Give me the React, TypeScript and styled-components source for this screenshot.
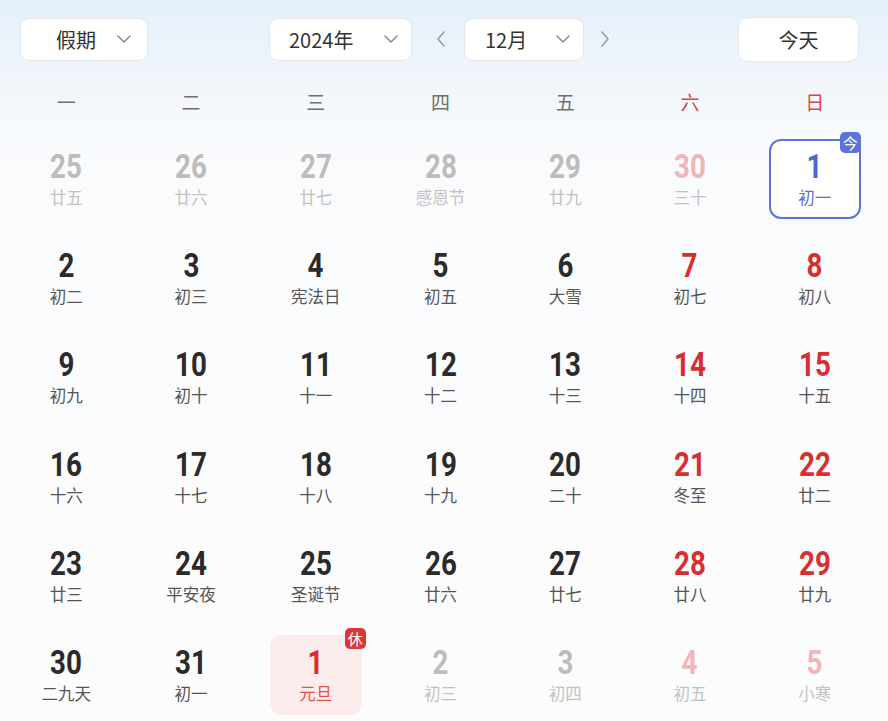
import React from "react";
import styled, { createGlobalStyle, css } from "styled-components";

const Global = createGlobalStyle`
  html, body { margin: 0; padding: 0; }
  body {
    width: 888px;
    height: 721px;
    overflow: hidden;
    font-family: "Noto Sans CJK SC", "Noto Sans", sans-serif;
    background: #fbfbfc;
  }
`;

const Page = styled.div`
  width: 888px;
  height: 721px;
  box-sizing: border-box;
  padding-top: 17px;
  background: linear-gradient(
    180deg,
    #e5f0fa 0px,
    #edf4fb 60px,
    #f5f8fc 110px,
    #fafbfc 170px,
    #fcfcfc 100%
  );
`;

const Toolbar = styled.div`
  display: flex;
  align-items: center;
  justify-content: space-between;
  height: 44px;
  padding: 0 29px 0 20px;
`;

const Group = styled.div`
  display: flex;
  align-items: center;
`;

const Select = styled.div<{ $w: number; $pl: number; $pr: number }>`
  box-sizing: border-box;
  width: ${(p) => p.$w}px;
  height: 43px;
  display: flex;
  align-items: center;
  justify-content: space-between;
  padding: 0 ${(p) => p.$pr}px 0 ${(p) => p.$pl}px;
  background: #ffffff;
  border: 1px solid #e4e6ea;
  border-radius: 9px;
  font-size: 20px;
  color: #333;
`;

const TodayButton = styled.div`
  box-sizing: border-box;
  width: 121px;
  height: 45px;
  display: flex;
  align-items: center;
  justify-content: center;
  background: #ffffff;
  border: 1px solid #e4e6ea;
  border-radius: 10px;
  font-size: 20px;
  color: #333;
`;

const ArrowBtn = styled.div<{ $ml: number; $mr: number }>`
  width: 24px;
  height: 43px;
  display: flex;
  align-items: center;
  justify-content: center;
  margin: 0 ${(p) => p.$mr}px 0 ${(p) => p.$ml}px;
`;

const WeekHeader = styled.div`
  display: grid;
  grid-template-columns: repeat(7, 1fr);
  width: 873px;
  margin: 12px 0 0 4px;
  height: 56px;
  align-items: center;
`;

const WeekLabel = styled.div<{ $red?: boolean }>`
  text-align: center;
  font-size: 19px;
  color: ${(p) => (p.$red ? "#d9473f" : "#707070")};
`;

const Grid = styled.div`
  display: grid;
  grid-template-columns: repeat(7, 1fr);
  grid-auto-rows: 99.2px;
  width: 873px;
  margin-left: 4px;
`;

const Cell = styled.div`
  display: flex;
  align-items: center;
  justify-content: center;
`;

type Kind = "normal" | "weekend" | "faded" | "fadedRed" | "today" | "holiday";

const DayBox = styled.div<{ $kind: Kind }>`
  position: relative;
  box-sizing: border-box;
  width: 92px;
  height: 80px;
  padding-top: 4px;
  border-radius: 12px;
  display: flex;
  flex-direction: column;
  align-items: center;
  justify-content: center;
  gap: 3px;
  ${(p) =>
    p.$kind === "today" &&
    css`
      border: 2px solid #5a74da;
      background: #ffffff;
    `}
  ${(p) =>
    p.$kind === "holiday" &&
    css`
      background: #fcecec;
    `}
`;

const numColor: Record<Kind, string> = {
  normal: "#2a2a2a",
  weekend: "#d72f31",
  faded: "#bcbcbc",
  fadedRed: "#f1b4b8",
  today: "#4c67d4",
  holiday: "#d72f31",
};

const lunarColor: Record<Kind, string> = {
  normal: "#555555",
  weekend: "#555555",
  faded: "#c2c2c2",
  fadedRed: "#c2c2c2",
  today: "#5b6fc6",
  holiday: "#e0514f",
};

const DayNum = styled.div<{ $kind: Kind }>`
  font-family: Roboto, "Liberation Sans", sans-serif;
  font-weight: 700;
  font-size: 33px;
  line-height: 30px;
  height: 30px;
  transform: scaleX(0.84);
  color: ${(p) => numColor[p.$kind]};
`;

const Lunar = styled.div<{ $kind: Kind }>`
  font-size: 16.5px;
  line-height: 24px;
  height: 24px;
  color: ${(p) => lunarColor[p.$kind]};
`;

const Badge = styled.div<{ $color: string; $top: number; $right: number }>`
  position: absolute;
  top: ${(p) => p.$top}px;
  right: ${(p) => p.$right}px;
  width: 21px;
  height: 21px;
  border-radius: 5px;
  background: ${(p) => p.$color};
  color: #fff;
  font-size: 15px;
  line-height: 21px;
  text-align: center;
`;

const Chevron = () => (
  <svg width="14" height="8" viewBox="0 0 14 8">
    <polyline
      points="1,1 7,7 13,1"
      fill="none"
      stroke="#8a8a8a"
      strokeWidth="1.5"
      strokeLinecap="round"
      strokeLinejoin="round"
    />
  </svg>
);

const Arrow = ({ dir }: { dir: "left" | "right" }) => (
  <svg width="10" height="16" viewBox="0 0 10 16">
    <polyline
      points={dir === "left" ? "8,1 2,8 8,15" : "2,1 8,8 2,15"}
      fill="none"
      stroke="#9a9a9a"
      strokeWidth="1.5"
      strokeLinecap="round"
      strokeLinejoin="round"
    />
  </svg>
);

type Day = { n: number; l: string; k: Kind; badge?: "today" | "rest" };

const d = (n: number, l: string, k: Kind = "normal", badge?: "today" | "rest"): Day => ({
  n,
  l,
  k,
  badge,
});

const days: Day[] = [
  d(25, "廿五", "faded"),
  d(26, "廿六", "faded"),
  d(27, "廿七", "faded"),
  d(28, "感恩节", "faded"),
  d(29, "廿九", "faded"),
  d(30, "三十", "fadedRed"),
  d(1, "初一", "today", "today"),
  d(2, "初二"),
  d(3, "初三"),
  d(4, "宪法日"),
  d(5, "初五"),
  d(6, "大雪"),
  d(7, "初七", "weekend"),
  d(8, "初八", "weekend"),
  d(9, "初九"),
  d(10, "初十"),
  d(11, "十一"),
  d(12, "十二"),
  d(13, "十三"),
  d(14, "十四", "weekend"),
  d(15, "十五", "weekend"),
  d(16, "十六"),
  d(17, "十七"),
  d(18, "十八"),
  d(19, "十九"),
  d(20, "二十"),
  d(21, "冬至", "weekend"),
  d(22, "廿二", "weekend"),
  d(23, "廿三"),
  d(24, "平安夜"),
  d(25, "圣诞节"),
  d(26, "廿六"),
  d(27, "廿七"),
  d(28, "廿八", "weekend"),
  d(29, "廿九", "weekend"),
  d(30, "二九天"),
  d(31, "初一"),
  d(1, "元旦", "holiday", "rest"),
  d(2, "初三", "faded"),
  d(3, "初四", "faded"),
  d(4, "初五", "fadedRed"),
  d(5, "小寒", "fadedRed"),
];

const weekdays = ["一", "二", "三", "四", "五", "六", "日"];

export default function App() {
  return (
    <Page>
      <Global />
      <Toolbar>
        <Select $w={128} $pl={35} $pr={16}>
          <span>假期</span>
          <Chevron />
        </Select>
        <Group>
          <Select $w={143} $pl={19} $pr={13}>
            <span>2024年</span>
            <Chevron />
          </Select>
          <ArrowBtn $ml={17} $mr={11}>
            <Arrow dir="left" />
          </ArrowBtn>
          <Select $w={120} $pl={20} $pr={13}>
            <span>12月</span>
            <Chevron />
          </Select>
          <ArrowBtn $ml={9} $mr={0}>
            <Arrow dir="right" />
          </ArrowBtn>
        </Group>
        <TodayButton>今天</TodayButton>
      </Toolbar>
      <WeekHeader>
        {weekdays.map((w, i) => (
          <WeekLabel key={w} $red={i >= 5}>
            {w}
          </WeekLabel>
        ))}
      </WeekHeader>
      <Grid>
        {days.map((day, i) => (
          <Cell key={i}>
            <DayBox $kind={day.k}>
              <DayNum $kind={day.k}>{day.n}</DayNum>
              <Lunar $kind={day.k}>{day.l}</Lunar>
              {day.badge === "today" && (
                <Badge $color="#5a74da" $top={-9} $right={-2}>
                  今
                </Badge>
              )}
              {day.badge === "rest" && (
                <Badge $color="#d63a35" $top={-7} $right={-4}>
                  休
                </Badge>
              )}
            </DayBox>
          </Cell>
        ))}
      </Grid>
    </Page>
  );
}
